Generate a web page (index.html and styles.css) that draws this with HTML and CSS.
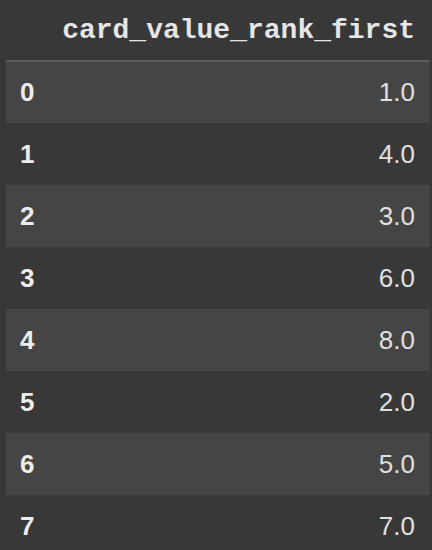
FILE: index.html
```html
<!DOCTYPE html>
<html>
<head>
<meta charset="utf-8">
<link rel="stylesheet" href="styles.css">
</head>
<body>
<table class="df">
  <thead>
    <tr><th class="idx"></th><th class="col">card_value_rank_first</th></tr>
  </thead>
  <tbody>
    <tr class="odd"><th class="idx">0</th><td class="val">1.0</td></tr>
    <tr><th class="idx">1</th><td class="val">4.0</td></tr>
    <tr class="odd"><th class="idx">2</th><td class="val">3.0</td></tr>
    <tr><th class="idx">3</th><td class="val">6.0</td></tr>
    <tr class="odd"><th class="idx">4</th><td class="val">8.0</td></tr>
    <tr><th class="idx">5</th><td class="val">2.0</td></tr>
    <tr class="odd"><th class="idx">6</th><td class="val">5.0</td></tr>
    <tr><th class="idx">7</th><td class="val">7.0</td></tr>
  </tbody>
</table>
</body>
</html>
```
FILE: styles.css
```css
html, body {
  margin: 0;
  padding: 0;
  background: #383838;
  height: 100%;
  overflow: hidden;
}
.df {
  margin-left: 6px;
  width: 424px;
  border-collapse: collapse;
  border-spacing: 0;
  font-family: "Liberation Sans", Arial, sans-serif;
  color: #e8e8e8;
}
.df thead tr {
  height: 61px;
  border-bottom: 2px solid #5b5b5b;
}
.df thead th.col {
  font-family: "Liberation Mono", "Courier New", monospace;
  font-weight: bold;
  font-size: 28px;
  text-align: right;
  padding: 0 15px 0 0;
  color: #e6e6e6;
  vertical-align: middle;
}
.df tbody tr {
  height: 62px;
}
.df tbody tr.odd {
  background: #454545;
}
.df th.idx {
  text-align: left;
  font-weight: bold;
  font-size: 26px;
  padding: 0 0 0 14px;
  width: 40px;
  color: #ececec;
}
.df td.val {
  text-align: right;
  font-size: 26px;
  padding: 0 15px 0 0;
  color: #e0e0e0;
}
```
